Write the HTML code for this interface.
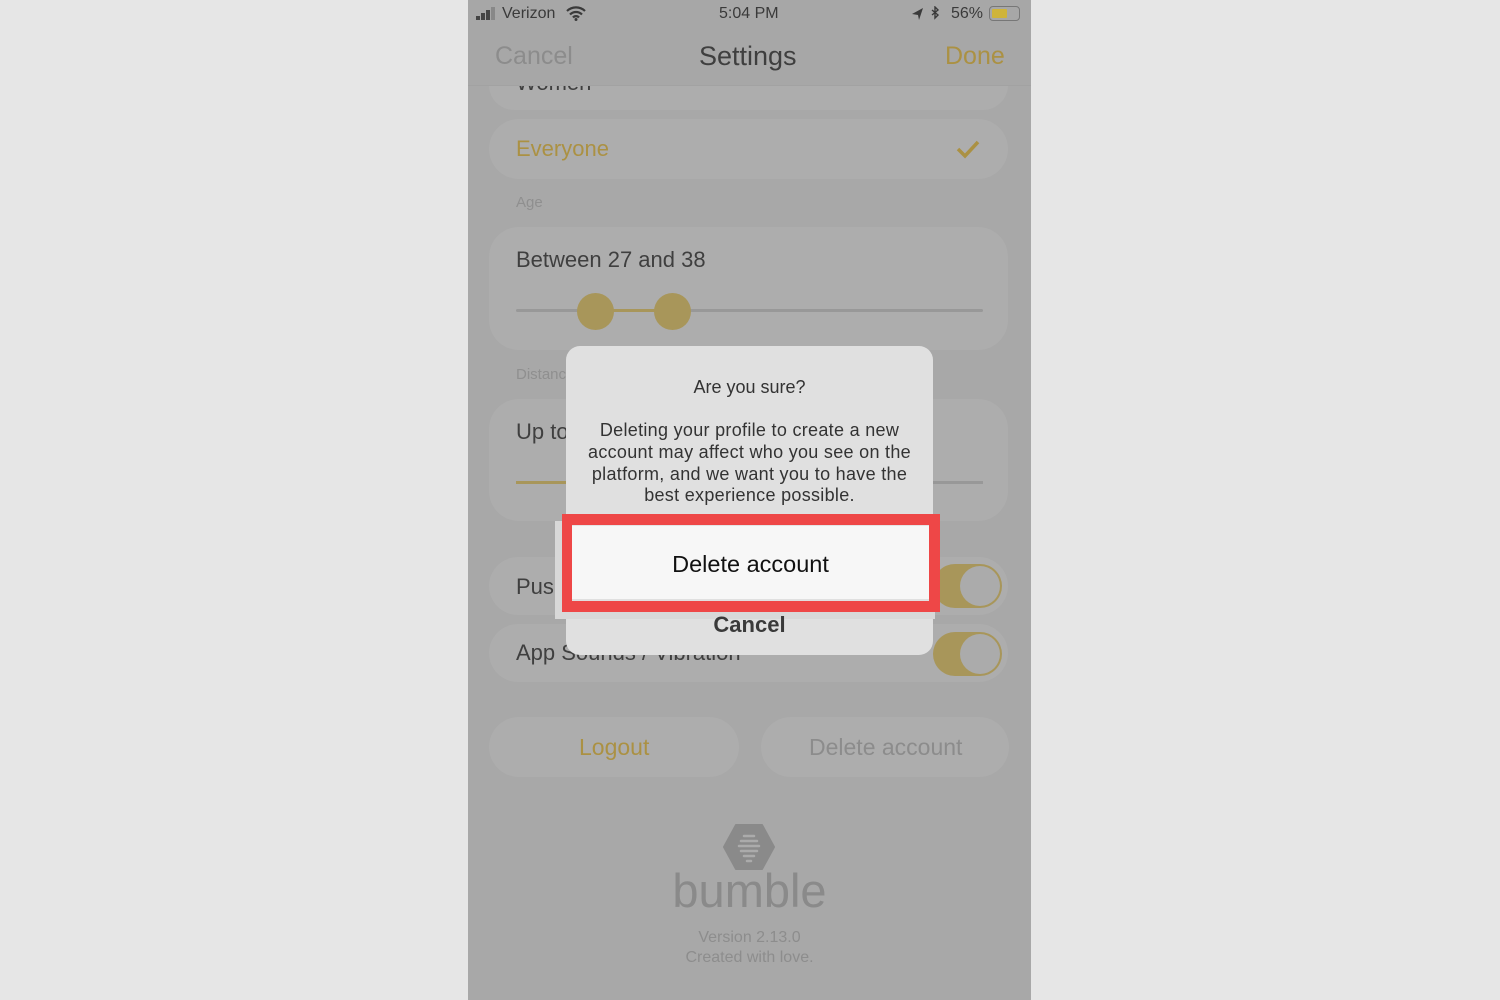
<!DOCTYPE html>
<html><head><meta charset="utf-8"><style>
*{margin:0;padding:0;box-sizing:border-box}
body{width:1500px;height:1000px;background:#e6e6e6;font-family:"Liberation Sans",sans-serif;position:relative;overflow:hidden}
.ph{position:absolute;left:468px;top:0;width:563px;height:1000px;background:#a8a8a8;overflow:hidden}
.a{position:absolute}
.card{position:absolute;background:#adadad;border-radius:30px}
.t{position:absolute;white-space:nowrap}
.hd{z-index:2}
</style></head><body>
<div class="ph">
 <div class="card" style="left:21px;top:60px;width:519px;height:50px"></div>
 <div class="t" style="left:48px;top:70px;font-size:22px;color:#3f3f3f">Women</div>
 <div class="a" style="left:0;top:0;width:563px;height:86px;background:#a7a7a7;border-bottom:1px solid #a2a2a2;z-index:1"></div>
 <div class="a hd" style="left:8px;top:16px;width:4px;height:4px;background:#444"></div>
 <div class="a hd" style="left:13px;top:13px;width:4px;height:7px;background:#444"></div>
 <div class="a hd" style="left:18px;top:10px;width:4px;height:10px;background:#444"></div>
 <div class="a hd" style="left:23px;top:7px;width:4px;height:13px;background:#888"></div>
 <div class="t hd" style="left:34px;top:5px;font-size:16px;color:#3a3a3a">Verizon</div>
 <svg class="a hd" style="left:98px;top:6px" width="20" height="15" viewBox="0 0 20 15"><path d="M1 5a13 13 0 0 1 18 0M4 8.5a8.5 8.5 0 0 1 12 0M7 11.5a4 4 0 0 1 6 0" stroke="#3a3a3a" stroke-width="2.2" fill="none"/><circle cx="10" cy="13.5" r="1.5" fill="#3a3a3a"/></svg>
 <div class="t hd" style="left:251px;top:5px;font-size:16px;color:#3a3a3a">5:04 PM</div>
 <svg class="a hd" style="left:443px;top:6px" width="32" height="16" viewBox="0 0 32 16"><path d="M1 8L12 2 8 14 7 9z" fill="#3a3a3a"/><path d="M21 4l6 5-3 3V1l3 3-6 5" stroke="#3a3a3a" stroke-width="1.4" fill="none"/></svg>
 <div class="t hd" style="left:483px;top:5px;font-size:16px;color:#3a3a3a">56%</div>
 <div class="a hd" style="left:521px;top:6px;width:31px;height:15px;border:1.5px solid #777;border-radius:4px"></div>
 <div class="a hd" style="left:524px;top:9px;width:15px;height:9px;background:#cfb43a;border-radius:1px"></div>
 <div class="t hd" style="left:27px;top:42px;font-size:25px;color:#8c8c8c">Cancel</div>
 <div class="t hd" style="left:231px;top:41px;font-size:27px;color:#3f3f3f">Settings</div>
 <div class="t hd" style="left:477px;top:42px;font-size:25px;color:#ab9143">Done</div>
 <div class="card" style="left:21px;top:119px;width:519px;height:60px"></div>
 <div class="t" style="left:48px;top:136px;font-size:22px;color:#ab9143">Everyone</div>
 <svg class="a" style="left:488px;top:139px" width="24" height="20"><path d="M2 10l7 7L22 3" stroke="#ab9143" stroke-width="3.5" fill="none"/></svg>
 <div class="t" style="left:48px;top:194px;font-size:15px;color:#8f8f8f">Age</div>
 <div class="card" style="left:21px;top:227px;width:519px;height:123px"></div>
 <div class="t" style="left:48px;top:247px;font-size:22px;color:#3f3f3f">Between 27 and 38</div>
 <div class="a" style="left:48px;top:309px;width:467px;height:3px;background:#989898;border-radius:2px"></div>
 <div class="a" style="left:128px;top:309px;width:76px;height:3px;background:#a8965a"></div>
 <div class="a" style="left:109px;top:293px;width:37px;height:37px;border-radius:50%;background:#a8965a"></div>
 <div class="a" style="left:186px;top:293px;width:37px;height:37px;border-radius:50%;background:#a8965a"></div>
 <div class="t" style="left:48px;top:366px;font-size:15px;color:#8f8f8f">Distance</div>
 <div class="card" style="left:21px;top:399px;width:519px;height:122px"></div>
 <div class="t" style="left:48px;top:419px;font-size:22px;color:#3f3f3f">Up to</div>
 <div class="a" style="left:48px;top:481px;width:467px;height:3px;background:#989898"></div>
 <div class="a" style="left:48px;top:481px;width:60px;height:3px;background:#a8965a"></div>
 <div class="card" style="left:21px;top:557px;width:519px;height:58px"></div>
 <div class="t" style="left:48px;top:574px;font-size:22px;color:#3f3f3f">Push</div>
 <div class="a" style="left:465px;top:564px;width:69px;height:44px;border-radius:22px;background:#a8965a"></div>
 <div class="a" style="left:492px;top:566px;width:40px;height:40px;border-radius:50%;background:#ababab"></div>
 <div class="card" style="left:21px;top:624px;width:519px;height:58px"></div>
 <div class="t" style="left:48px;top:640px;font-size:22px;color:#3f3f3f">App Sounds / Vibration</div>
 <div class="a" style="left:465px;top:632px;width:69px;height:44px;border-radius:22px;background:#a8965a"></div>
 <div class="a" style="left:492px;top:634px;width:40px;height:40px;border-radius:50%;background:#ababab"></div>
 <div class="card" style="left:21px;top:717px;width:250px;height:60px"></div>
 <div class="t" style="left:111px;top:734px;font-size:23px;color:#ab9143">Logout</div>
 <div class="card" style="left:293px;top:717px;width:248px;height:60px"></div>
 <div class="t" style="left:341px;top:734px;font-size:23px;color:#8c8c8c">Delete account</div>
 <svg class="a" style="left:255px;top:824px" width="52" height="46" viewBox="0 0 52 46"><path d="M13 1h26l12 22-12 22H13L1 23z" fill="#8a8a8a" stroke="#8a8a8a" stroke-linejoin="round" stroke-width="2"/><g stroke="#ababab" stroke-width="2.5" stroke-linecap="round"><path d="M21 12h10M18 17h16M16 22h20M18 27h16M21 32h10M24 37h4"/></g></svg>
 <div class="t" style="left:0;width:563px;text-align:center;top:863px;font-size:47px;color:#8a8a8a">bumble</div>
 <div class="t" style="left:0;width:563px;text-align:center;top:928px;font-size:16px;color:#8d8d8d;line-height:20px">Version 2.13.0<br>Created with love.</div>
 <div class="a" style="left:98px;top:346px;width:367px;height:309px;background:#e0e0e0;border-radius:14px;z-index:2"></div>
 <div class="t" style="left:98px;width:367px;text-align:center;top:377px;font-size:18px;color:#333;z-index:3">Are you sure?</div>
 <div class="t" style="left:98px;width:367px;text-align:center;top:420px;font-size:18px;letter-spacing:0.3px;color:#333;line-height:21.8px;z-index:3">Deleting your profile to create a new<br>account may affect who you see on the<br>platform, and we want you to have the<br>best experience possible.</div>
 <div class="a" style="left:87px;top:521px;width:380px;height:98px;background:#d8d8d8;z-index:3"></div>
 <div class="a" style="left:94px;top:514px;width:378px;height:98px;background:#ee4747;z-index:4"></div>
 <div class="a" style="left:104px;top:525px;width:357px;height:76px;background:#f7f7f7;border-top:1px solid #e4e4e4;border-bottom:2px solid #e0e0e0;z-index:5"></div>
 <div class="t" style="left:104px;width:357px;text-align:center;top:551px;font-size:23.5px;color:#111;z-index:6">Delete account</div>
 <div class="t" style="left:98px;width:367px;text-align:center;top:612px;font-size:22px;color:#3a3a3a;font-weight:bold;z-index:6">Cancel</div>
</div>
</body></html>
